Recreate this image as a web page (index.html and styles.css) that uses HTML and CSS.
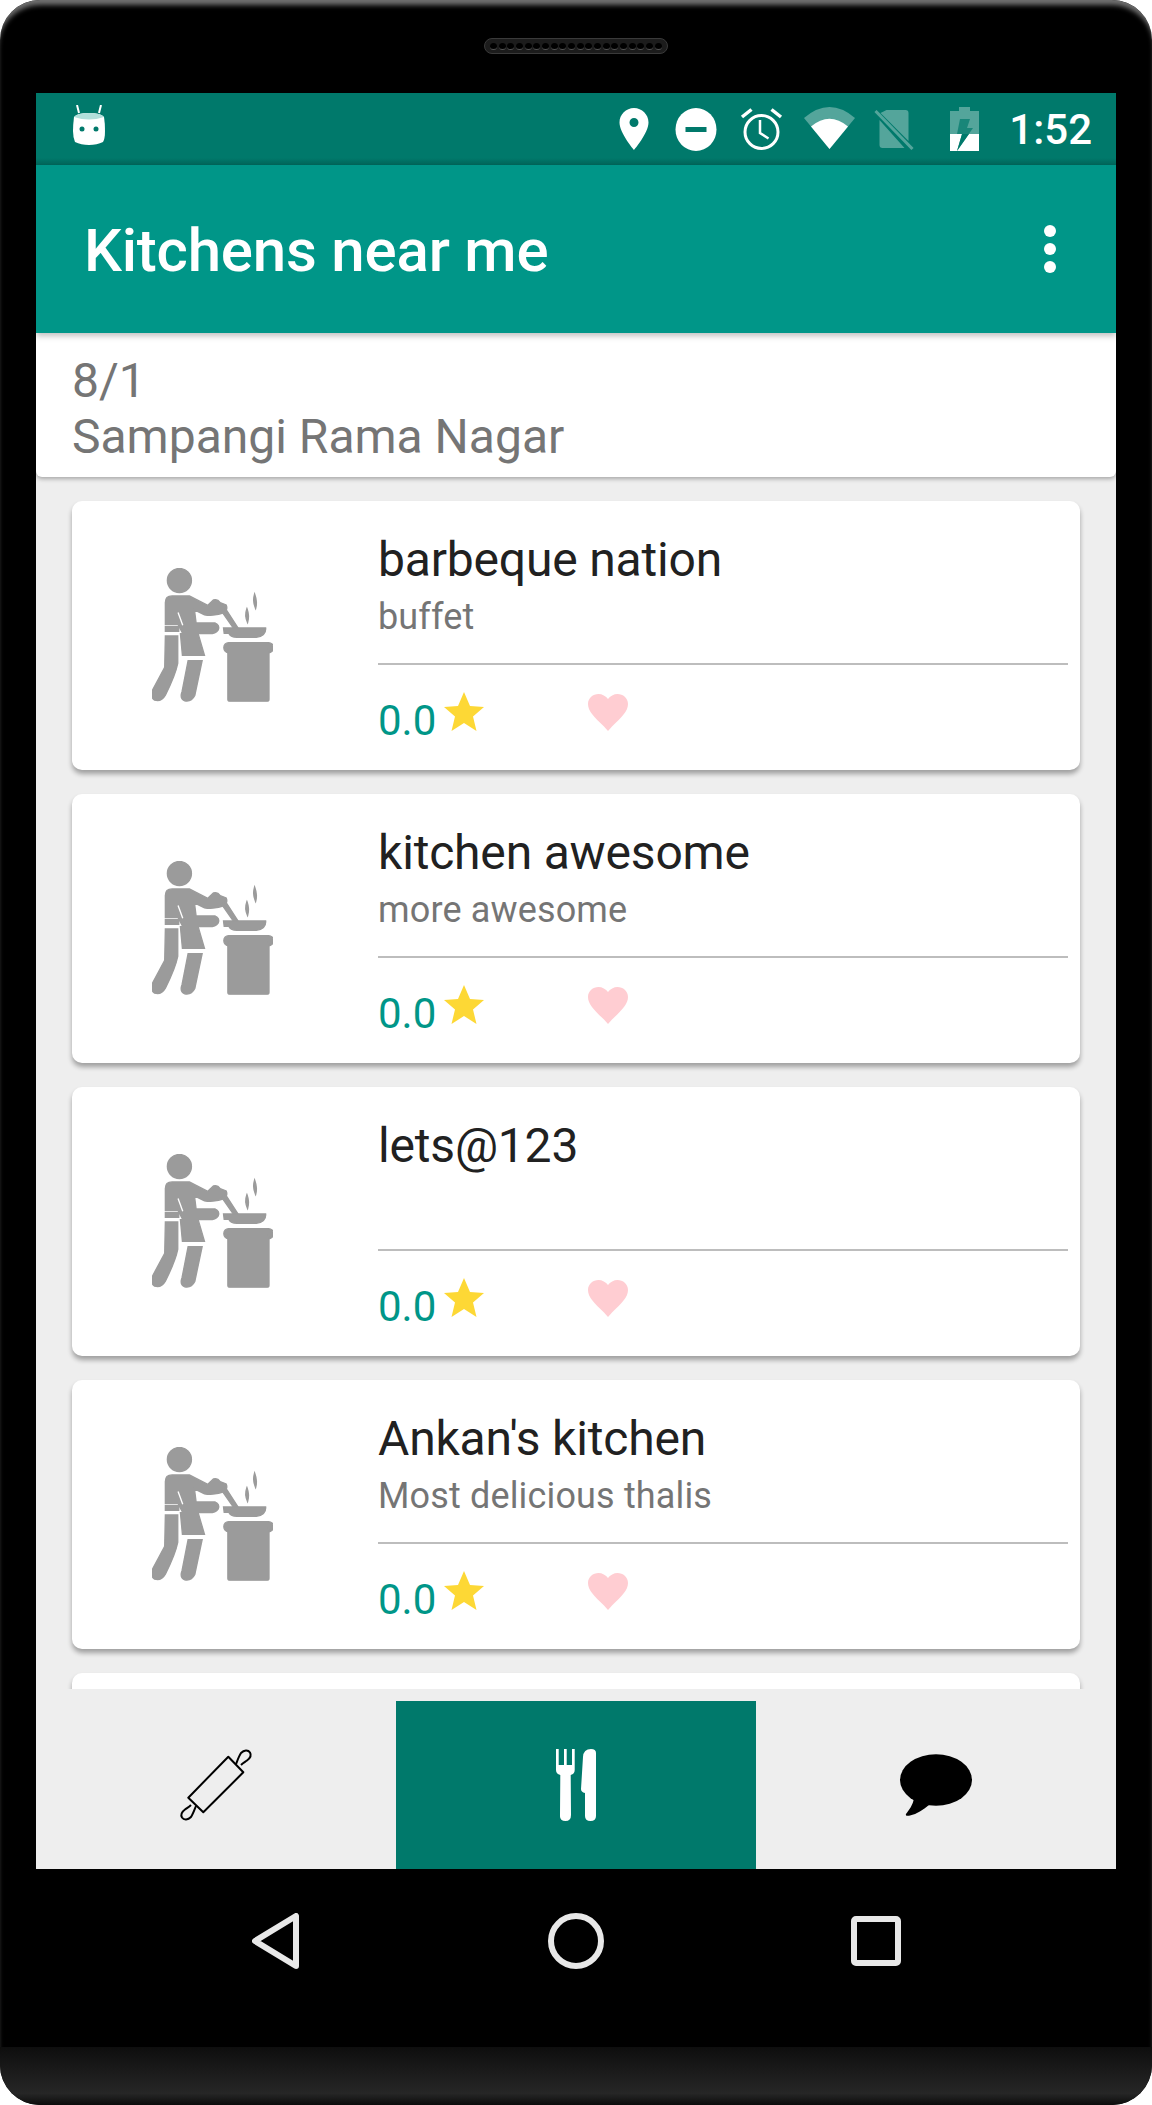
FILE: index.html
```html
<!DOCTYPE html>
<html lang="en">
<head>
    <meta charset="UTF-8">
    <meta name="viewport" content="width=device-width, initial-scale=1.0">
    <title>Kitchens near me</title>
    <link rel="stylesheet" href="styles.css">
</head>
<body>
    <!-- shared icons -->
    <svg class="defs" aria-hidden="true">
        <symbol id="cook" viewBox="38 55 362 400">
            <circle cx="120" cy="92" r="36"/>
            <path d="M78 224V158Q78 138 98 138H150L205 166L222 150Q234 146 242 158L260 165Q266 178 254 188Q225 200 195 195L165 180L170 219H226Q242 226 236 240Q228 251 210 251H130L116 224Z"/>
            <path d="M116 188L130 226" stroke="#fff" stroke-width="4" fill="none"/>
            <rect x="78" y="230" width="40" height="14"/>
            <path d="M78 258H115V340Q108 375 78 435Q66 456 46 450Q30 440 42 415L76 352Z"/>
            <path d="M123 251H176L195 316H129Z"/>
            <path d="M146 332H188L166 436Q156 456 136 452Q120 446 128 424Z"/>
            <path d="M246 184L258 176L298 238H284Z"/>
            <path d="M252 234H378Q380 258 350 262H292Q274 262 268 250H254Z"/>
            <path d="M345 132Q354 155 348 176Q338 155 345 132Z"/>
            <path d="M322 176Q330 198 324 218Q314 198 322 176Z"/>
            <rect x="253" y="278" width="148" height="30" rx="14"/>
            <rect x="265" y="296" width="123" height="157" rx="6"/>
        </symbol>
        <symbol id="star" viewBox="0 0 40 39">
            <path d="M20 0L26 14L40 15L29 24.500L32.500 39L20 31L7.500 39L11 24.500L0 15L14 14Z"/>
        </symbol>
        <symbol id="heart" viewBox="0 0 40 37">
            <path d="M20 37L16 32.500C6 23 0 17 0 10C0 4 5 0 10.500 0C14 0 18 2 20 5C22 2 26 0 29.500 0C35 0 40 4 40 10C40 17 34 23 24 32.500Z"/>
        </symbol>
    </svg>

    <div class="phone">
        <div class="bezel-top">
            <div class="speaker">
                <i></i><i></i><i></i><i></i><i></i><i></i><i></i><i></i><i></i><i></i>
                <i></i><i></i><i></i><i></i><i></i><i></i><i></i><i></i><i></i><i></i>
            </div>
        </div>

        <div class="screen">
            <div class="status-bar">
                <svg class="st-android" viewBox="0 0 32 40">
                    <path d="M6 8L4 0M26 8L28 0" stroke="#fff" stroke-width="2" fill="none"/>
                    <path d="M1 12Q4 8 16 8T31 12Q32 18 32 26T30 37Q24 40 16 40T2 37Q0 32 0 26T1 12Z" fill="#fff"/>
                    <path d="M1 12Q4 8 16 8T31 12Q16 17 1 12Z" fill="#b2dfdb"/>
                    <circle cx="9" cy="24" r="2.500" fill="#00796b"/>
                    <circle cx="23" cy="24" r="2.500" fill="#00796b"/>
                </svg>
                <div class="status-icons">
                    <svg class="st-pin" viewBox="0 0 29 42">
                        <path fill-rule="evenodd" fill="#fff" d="M14.500 0C6.500 0 0 6.500 0 14.500C0 25 14.500 42 14.500 42S29 25 29 14.500C29 6.500 22.500 0 14.500 0ZM14.500 10A4.500 4.500 0 1 1 14.500 19A4.500 4.500 0 1 1 14.500 10Z"/>
                    </svg>
                    <svg class="st-dnd" viewBox="0 0 41 43">
                        <ellipse cx="20.500" cy="21.500" rx="20.500" ry="21.500" fill="#fff"/>
                        <rect x="10" y="19" width="21" height="5" fill="#00796b"/>
                    </svg>
                    <svg class="st-alarm" viewBox="0 0 42 43" fill="none" stroke="#fff">
                        <circle cx="21" cy="24" r="16.500" stroke-width="3"/>
                        <path d="M19.500 12V25L28 30.500" stroke-width="2.500"/>
                        <path d="M11 1.500L1.500 9M31 1.500L40.500 9" stroke-width="3.500"/>
                    </svg>
                    <svg class="st-wifi" viewBox="0 0 51 42">
                        <path d="M25.500 42L0 11Q25.500 -11 51 11Z" fill="#fff" fill-opacity=".33"/>
                        <path d="M25.500 42L7 19.500Q25.500 4 44 19.500Z" fill="#fff"/>
                    </svg>
                    <svg class="st-sim" viewBox="0 0 40 40">
                        <path d="M12 0H31Q34 0 34 3V31L6 3ZM5 10L30 38H8Q5 38 5 35Z" fill="#fff" fill-opacity=".33"/>
                        <path d="M1 1L38 39" stroke="#fff" stroke-opacity=".33" stroke-width="3"/>
                    </svg>
                    <svg class="st-battery" viewBox="0 0 29 44">
                        <path d="M9 0H20V4H29V27H0V4H9Z" fill="#fff" fill-opacity=".33"/>
                        <path d="M0 27H12L7 44H0ZM19 27H29V44H7Z" fill="#fff"/>
                        <path d="M10 12H20L17 21H23L7 44L12 27H7Z" fill="#00796b" fill-opacity=".7"/>
                    </svg>
                </div>
                <span class="clock">1:52</span>
            </div>

            <header class="app-bar">
                <h1 class="app-title">Kitchens near me</h1>
                <div class="overflow"><i></i><i></i><i></i></div>
            </header>

            <div class="address">
                <div>8/1</div>
                <div>Sampangi Rama Nagar</div>
            </div>

            <div class="kitchen-list">
                <div class="card">
                    <div class="card-pic"><svg class="cook"><use href="#cook"/></svg></div>
                    <div class="card-body">
                        <div class="name">barbeque nation</div>
                        <div class="desc">buffet</div>
                        <div class="divider"></div>
                        <div class="meta">
                            <span class="rating">0.0</span>
                            <svg class="star"><use href="#star"/></svg>
                            <svg class="heart"><use href="#heart"/></svg>
                        </div>
                    </div>
                </div>
                <div class="card">
                    <div class="card-pic"><svg class="cook"><use href="#cook"/></svg></div>
                    <div class="card-body">
                        <div class="name">kitchen awesome</div>
                        <div class="desc">more awesome</div>
                        <div class="divider"></div>
                        <div class="meta">
                            <span class="rating">0.0</span>
                            <svg class="star"><use href="#star"/></svg>
                            <svg class="heart"><use href="#heart"/></svg>
                        </div>
                    </div>
                </div>
                <div class="card">
                    <div class="card-pic"><svg class="cook"><use href="#cook"/></svg></div>
                    <div class="card-body">
                        <div class="name">lets@123</div>
                        <div class="desc"></div>
                        <div class="divider"></div>
                        <div class="meta">
                            <span class="rating">0.0</span>
                            <svg class="star"><use href="#star"/></svg>
                            <svg class="heart"><use href="#heart"/></svg>
                        </div>
                    </div>
                </div>
                <div class="card">
                    <div class="card-pic"><svg class="cook"><use href="#cook"/></svg></div>
                    <div class="card-body">
                        <div class="name">Ankan's kitchen</div>
                        <div class="desc">Most delicious thalis</div>
                        <div class="divider"></div>
                        <div class="meta">
                            <span class="rating">0.0</span>
                            <svg class="star"><use href="#star"/></svg>
                            <svg class="heart"><use href="#heart"/></svg>
                        </div>
                    </div>
                </div>
                <div class="card"></div>
            </div>

            <nav class="tabs">
                <div class="tab">
                    <svg class="tab-icon" viewBox="0 0 72 72" fill="none" stroke="#000" stroke-width="2" stroke-linejoin="round">
                        <path d="M48.300 7.700L63.300 23.300L23.300 63.300L8.300 48.700Z"/>
                        <path d="M56 15C58 10 59 7 61 4C64 1 68 0.500 70 3.500C72 7 69 10 67 11.500C65 13 63 14 61 16"/>
                        <path d="M16 57C14 62 13 65 11 68C8 71 4 71.500 2 68.500C0 65 3 62 5 60.500C7 59 9 58 11 56"/>
                    </svg>
                </div>
                <div class="tab tab-active">
                    <svg class="tab-icon cutlery" viewBox="0 0 40 72" fill="#fff">
                        <path d="M0 0H2.700V16H8V0H10.700V16H16V0H18.700V21Q18.700 25 14.700 26L15 66Q15 72 9.500 72Q3.500 72 4 66L4.300 26Q0 25 0 21Z"/>
                        <path d="M40 4V67Q40 72 34.500 72Q29 72 29 67V44Q25 43 25 40L27 8Q27.500 0 35 0Q40 0 40 4Z"/>
                    </svg>
                </div>
                <div class="tab">
                    <svg class="tab-icon" viewBox="0 0 72 72" fill="#000">
                        <ellipse cx="36" cy="31" rx="36" ry="25.700"/>
                        <path d="M14 49C13 56 9 61 6 65C5 67 8 67 10 66.500C17 65 23 61 29 56Z"/>
                    </svg>
                </div>
            </nav>
        </div>

        <div class="nav-bar">
            <div class="nav-key">
                <svg class="key-back" viewBox="0 0 48 56" fill="none" stroke="#e8e8e8" stroke-width="6" stroke-linejoin="round"><path d="M44 3V53L3 28Z"/></svg>
            </div>
            <div class="nav-key">
                <svg class="key-home" viewBox="0 0 56 56" fill="none" stroke="#e8e8e8" stroke-width="6"><circle cx="28" cy="28" r="25"/></svg>
            </div>
            <div class="nav-key">
                <svg class="key-recent" viewBox="0 0 50 50" fill="none" stroke="#e8e8e8" stroke-width="6"><rect x="3" y="3" width="44" height="44" rx="2"/></svg>
            </div>
        </div>

        <div class="chin"></div>
    </div>
</body>
</html>
```

FILE: styles.css
```css
* {
    box-sizing: border-box;
}
body {
    margin: 0;
    background-color: #fff;
    font-family: Roboto, sans-serif;
}
.defs {
    display: none;
}
.phone {
    width: 1152px;
    height: 2105px;
    display: flex;
    flex-direction: column;
    background-color: #000;
    border-radius: 40px;
    overflow: hidden;
    box-shadow: inset 0 7px 5px -2px #707070;
}

/* top of the device */
.bezel-top {
    height: 93px;
    padding-top: 38px;
    display: flex;
    justify-content: center;
    align-items: flex-start;
}
.speaker {
    width: 184px;
    height: 16px;
    padding: 0 5px;
    display: flex;
    justify-content: space-between;
    align-items: center;
    background-color: #1c1c1c;
    border: 1px solid #3a3a3a;
    border-radius: 8px;
}
.speaker i {
    width: 7px;
    height: 7px;
    background-color: #000;
    border-bottom: 1px solid #555;
    border-radius: 50%;
}

/* app area */
.screen {
    height: 1776px;
    margin: 0 36px;
    display: flex;
    flex-direction: column;
    background-color: #eee;
}
.status-bar {
    height: 72px;
    flex: none;
    padding: 12px 24px 0 37px;
    display: flex;
    align-items: flex-start;
    background: linear-gradient(#00796b 90%, #00665a);
}
.st-android {
    width: 32px;
    height: 40px;
}
.status-icons {
    margin-left: auto;
    margin-top: 2px;
    display: flex;
    align-items: flex-start;
}
.st-pin {
    width: 30px;
    height: 42px;
    margin-right: 26px;
    margin-top: 1px;
}
.st-dnd {
    width: 42px;
    height: 43px;
    margin-right: 23px;
    margin-top: 1px;
}
.st-alarm {
    width: 43px;
    height: 43px;
    margin-right: 20px;
    margin-top: 1px;
}
.st-wifi {
    width: 53px;
    height: 42px;
    margin-right: 18px;
}
.st-sim {
    width: 41px;
    height: 40px;
    margin-right: 35px;
    margin-top: 3px;
}
.st-battery {
    width: 29px;
    height: 44px;
}
.clock {
    margin-left: 30px;
    color: #fff;
    font-size: 42px;
    font-weight: 500;
    line-height: 49px;
    white-space: nowrap;
}
.app-bar {
    height: 168px;
    flex: none;
    padding: 0 60px 0 48px;
    display: flex;
    justify-content: space-between;
    align-items: center;
    background-color: #009688;
    box-shadow: 0 3px 6px rgba(0, 0, 0, 0.25);
    position: relative;
}
.app-title {
    margin: 2px 0 0;
    color: #fff;
    font-size: 60px;
    font-weight: 500;
    letter-spacing: -0.2px;
}
.overflow {
    display: flex;
    flex-direction: column;
    gap: 6px;
}
.overflow i {
    width: 12px;
    height: 12px;
    background-color: #fff;
    border-radius: 50%;
}
.address {
    height: 144px;
    flex: none;
    padding: 20px 36px 0;
    background-color: #fff;
    border-radius: 0 0 6px 6px;
    box-shadow: 0 2px 4px rgba(0, 0, 0, 0.3);
    color: #757575;
    font-size: 48px;
    line-height: 56px;
}

/* list */
.kitchen-list {
    height: 1212px;
    flex: none;
    padding: 24px 36px 0;
    display: flex;
    flex-direction: column;
    gap: 24px;
    overflow: hidden;
}
.card {
    height: 269px;
    flex: none;
    display: flex;
    background-color: #fff;
    border-radius: 10px;
    box-shadow: 0 4px 5px rgba(0, 0, 0, 0.33);
}
.card-pic {
    width: 306px;
    flex: none;
    padding: 67px 0 0 80px;
}
.cook {
    display: block;
    width: 121px;
    height: 134px;
    fill: #9b9b9b;
    stroke: #9b9b9b;
    stroke-width: 4px;
    filter: blur(0.6px);
}
.card-body {
    flex: 1;
    padding: 31px 12px 0 0;
}
.name {
    color: #212121;
    font-size: 48px;
    line-height: 56px;
    letter-spacing: -0.18px;
}
.desc {
    height: 42px;
    margin-top: 8px;
    color: #757575;
    font-size: 36px;
    line-height: 42px;
    letter-spacing: 0.15px;
}
.divider {
    height: 2px;
    margin-top: 25px;
    background-color: #bdbdbd;
}
.meta {
    margin-top: 27px;
    display: flex;
    align-items: flex-start;
}
.rating {
    margin-top: 4px;
    color: #009688;
    font-size: 42px;
    line-height: 49px;
}
.star {
    width: 40px;
    height: 39px;
    margin-left: 8px;
    fill: #fdd835;
}
.heart {
    width: 40px;
    height: 37px;
    margin-top: 2px;
    margin-left: 104px;
    fill: #ffcdd2;
}

/* bottom tabs */
.tabs {
    height: 168px;
    flex: none;
    margin-top: 12px;
    display: grid;
    grid-template-columns: repeat(3, 1fr);
}
.tab {
    display: flex;
    justify-content: center;
    align-items: center;
}
.tab-active {
    background-color: #00796b;
}
.tab-icon {
    width: 72px;
    height: 72px;
    overflow: visible;
}
.cutlery {
    width: 40px;
}

/* android keys */
.nav-bar {
    height: 178px;
    flex: none;
    padding-top: 44px;
    display: flex;
    justify-content: center;
}
.nav-key {
    width: 300px;
    height: 56px;
    display: flex;
    justify-content: center;
    align-items: center;
}
.key-back {
    width: 48px;
    height: 56px;
}
.key-home {
    width: 56px;
    height: 56px;
}
.key-recent {
    width: 50px;
    height: 50px;
}
.chin {
    flex: 1;
    background: linear-gradient(#0e0e0e, #262626 80%, #0c0c0c);
}
```
